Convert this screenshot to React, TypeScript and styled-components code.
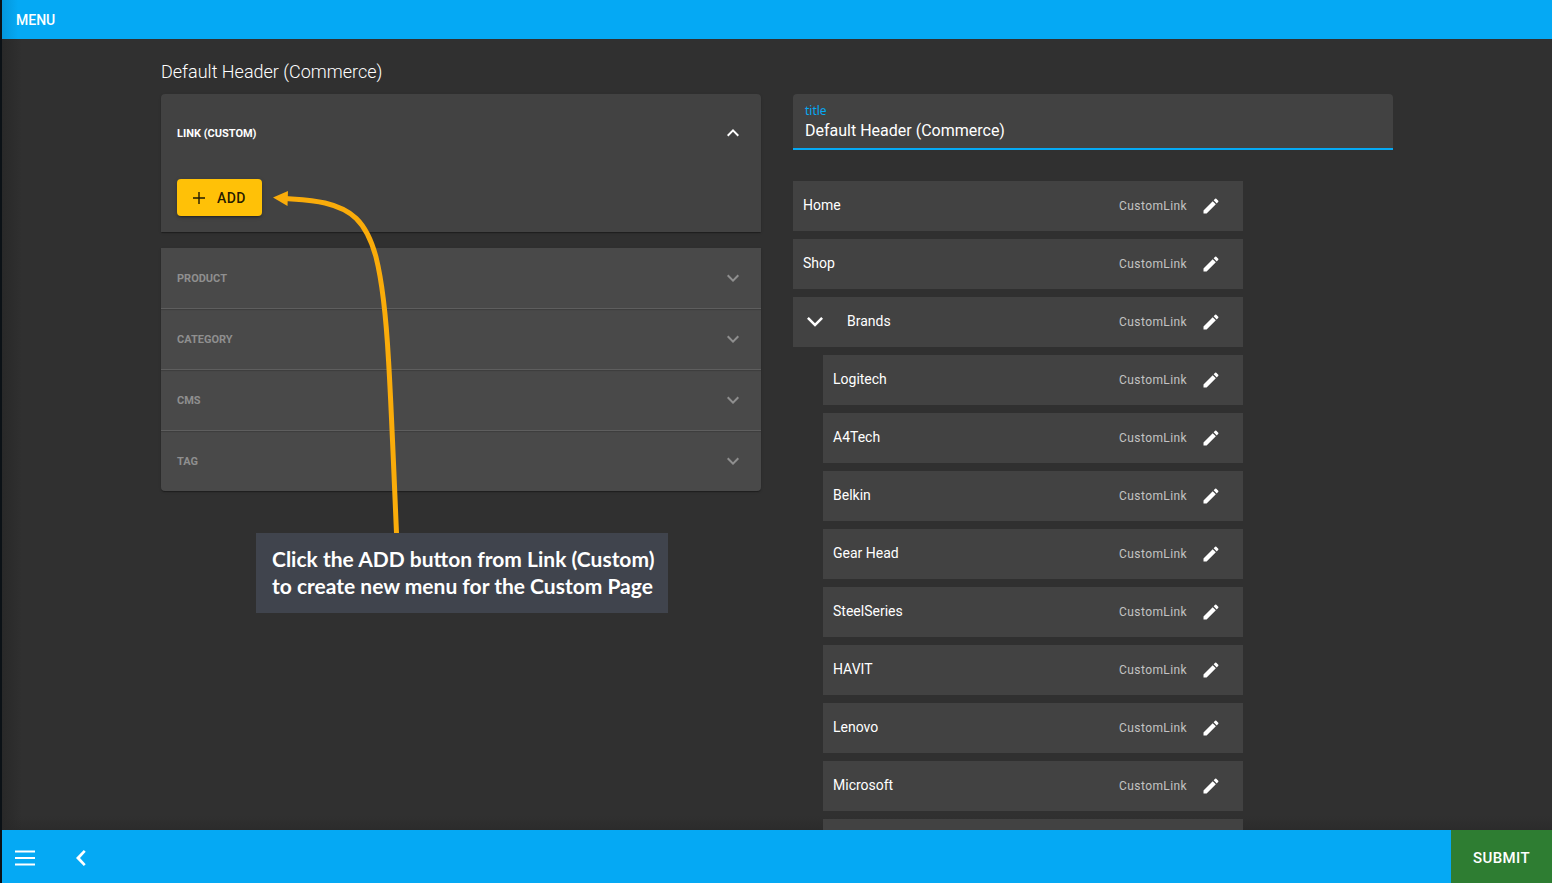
import React from "react";
import styled, { createGlobalStyle } from "styled-components";

const GlobalStyle = createGlobalStyle`
  * { box-sizing: border-box; }
  body {
    margin: 0;
    background: #303030;
    color: #fff;
    font-family: Roboto, "Liberation Sans", sans-serif;
    font-size: 14px;
    line-height: 20px;
  }
  button, input { font-family: inherit; color: inherit; }
`;

const Page = styled.div`
  height: 100vh;
  display: flex;
  flex-direction: column;
  border-left: 2px solid #0b1116;
  background: #303030;
  overflow: hidden;
`;

const TopBar = styled.header`
  flex: none;
  height: 39px;
  padding: 0 14px;
  display: flex;
  align-items: center;
  background: linear-gradient(90deg, #0496db 0, #05a9f4 16px) #05a9f4;
`;

const TopTitle = styled.h1`
  margin: 0;
  font-size: 14px;
  font-weight: 500;
  line-height: 20px;
`;

const Main = styled.main`
  flex: 1;
  min-height: 0;
  overflow: hidden;
  background: linear-gradient(90deg, #282828 0, rgba(48, 48, 48, 0) 20px),
    linear-gradient(0deg, #2b2b2b 0, rgba(48, 48, 48, 0) 14px);
`;

const Container = styled.div`
  max-width: 1280px;
  margin: 0 auto;
  padding: 20px 24px 0;
`;

const PageTitle = styled.h2`
  margin: 0 0 9px;
  font-size: 18px;
  font-weight: 300;
  line-height: 26px;
`;

const Columns = styled.div`
  display: grid;
  grid-template-columns: 1fr 1fr;
  gap: 32px;
  align-items: start;
`;

const Side = styled.section`
  position: relative;
  display: flex;
  flex-direction: column;
  gap: 16px;
`;

const cardShadow =
  "0 2px 1px -1px rgba(0,0,0,.2), 0 1px 1px rgba(0,0,0,.14), 0 1px 3px rgba(0,0,0,.12)";

const OpenPanel = styled.div`
  background: #424242;
  border-radius: 4px 4px 0 0;
  box-shadow: ${cardShadow};
`;

const PanelHeader = styled.button<{ $open?: boolean }>`
  width: 100%;
  height: ${(p) => (p.$open ? 77 : 60)}px;
  padding: 0 16px;
  display: flex;
  align-items: center;
  justify-content: space-between;
  border: 0;
  background: none;
  color: ${(p) => (p.$open ? "#fff" : "#8f8f8f")};
  font-size: 11px;
  font-weight: 700;
  line-height: 16px;
  text-transform: uppercase;
`;

const PanelLabel = styled.span`
  padding-top: 2px;
`;

const PanelBody = styled.div`
  padding: 8px 16px 16px;
`;

const PanelStack = styled.div`
  background: #494949;
  border-radius: 0 0 4px 4px;
  box-shadow: ${cardShadow};
`;

const ClosedPanel = styled.div`
  & + & {
    border-top: 1px solid #5e5e5e;
    box-shadow: inset 0 2px 1px -1px rgba(0, 0, 0, 0.16);
  }
`;

const AddButton = styled.button`
  height: 37px;
  padding: 0 16px 0 12px;
  display: flex;
  align-items: center;
  gap: 8px;
  border: 0;
  border-radius: 4px;
  background: #ffc107;
  color: rgba(0, 0, 0, 0.87);
  font-size: 14px;
  font-weight: 500;
  letter-spacing: 0.4px;
  box-shadow: 0 3px 1px -2px rgba(0, 0, 0, 0.2), 0 2px 2px rgba(0, 0, 0, 0.14),
    0 1px 5px rgba(0, 0, 0, 0.12);
`;

const Icon = styled.svg<{ $size: number }>`
  display: block;
  flex: none;
  width: ${(p) => p.$size}px;
  height: ${(p) => p.$size}px;
  fill: currentColor;
`;

const Arrow = styled.svg`
  position: absolute;
  left: 104px;
  top: 86px;
  width: 150px;
  height: 354px;
  pointer-events: none;
`;

const Callout = styled.p`
  position: absolute;
  left: 95px;
  top: 439px;
  width: 412px;
  height: 80px;
  margin: 0;
  padding: 12px 16px;
  background: #40444d;
  font-family: Lato, "Liberation Sans", sans-serif;
  font-size: 21px;
  font-weight: 700;
  line-height: 27px;
  white-space: nowrap;
`;

const Editor = styled.section`
  display: flex;
  flex-direction: column;
  gap: 31px;
`;

const Field = styled.div`
  height: 56px;
  padding: 8px 12px 0;
  display: flex;
  flex-direction: column;
  gap: 1px;
  border-bottom: 2px solid #05a9f4;
  border-radius: 4px 4px 0 0;
  background: #424242;
`;

const FieldLabel = styled.label`
  color: #05a9f4;
  font-family: "Noto Sans", sans-serif;
  font-size: 12px;
  line-height: 18px;
`;

const FieldInput = styled.input`
  width: 100%;
  height: 20px;
  padding: 0;
  border: 0;
  outline: 0;
  background: none;
  font-size: 16px;
  line-height: 20px;
`;

const MenuList = styled.ul`
  width: 75%;
  margin: 0;
  padding: 0;
  display: flex;
  flex-direction: column;
  gap: 8px;
  list-style: none;
`;

const MenuItem = styled.li<{ $nested?: boolean }>`
  height: 50px;
  margin-left: ${(p) => (p.$nested ? 30 : 0)}px;
  padding: 0 20px 0 10px;
  display: flex;
  align-items: center;
  background: #424242;
`;

const ItemName = styled.span`
  flex: 1;
  padding-bottom: 2px;
`;

const ItemType = styled.span`
  margin-right: 12px;
  color: #c3c3c3;
  font-size: 12px;
  letter-spacing: 0.4px;
`;

const IconButton = styled.button`
  padding: 0;
  border: 0;
  background: none;
`;

const ExpandButton = styled(IconButton)`
  margin-right: 20px;
`;

const EditButton = styled(IconButton)`
  padding: 2px;
`;

const BottomBar = styled.footer`
  flex: none;
  height: 53px;
  padding-left: 11px;
  display: flex;
  align-items: center;
  gap: 32px;
  background: #05a9f4;
`;

const BarButton = styled(IconButton)`
  padding-top: 2px;
`;

const SubmitButton = styled.button`
  width: 101px;
  height: 100%;
  margin-left: auto;
  padding: 2px 0 0;
  border: 0;
  background: #2e7d32;
  font-size: 15px;
  font-weight: 500;
  letter-spacing: 0.4px;
`;

const DOWN = "M7.41 8.59 12 13.17l4.59-4.58L18 10l-6 6-6-6 1.41-1.41z";
const UP = "M7.41 15.41 12 10.83l4.59 4.58L18 14l-6-6-6 6z";
const PENCIL =
  "M3 17.25V21h3.75L17.81 9.94l-3.75-3.75L3 17.25zM20.71 7.04c.39-.39.39-1.02 0-1.41l-2.34-2.34a.9959.9959 0 0 0-1.41 0l-1.83 1.83 3.75 3.75 1.83-1.83z";

const Glyph = ({ d, size }: { d: string; size: number }) => (
  <Icon $size={size} viewBox="0 0 24 24" aria-hidden="true">
    <path d={d} />
  </Icon>
);

const closedPanels = ["Product", "Category", "CMS", "Tag"];

const items = [
  { name: "Home" },
  { name: "Shop" },
  { name: "Brands", expandable: true },
  ...[
    "Logitech",
    "A4Tech",
    "Belkin",
    "Gear Head",
    "SteelSeries",
    "HAVIT",
    "Lenovo",
    "Microsoft",
  ].map((name) => ({ name, nested: true })),
] as { name: string; expandable?: boolean; nested?: boolean }[];

export default function App() {
  return (
    <>
      <GlobalStyle />
      <Page>
        <TopBar>
          <TopTitle>MENU</TopTitle>
        </TopBar>
        <Main>
          <Container>
            <PageTitle>Default Header (Commerce)</PageTitle>
            <Columns>
              <Side>
                <OpenPanel>
                  <PanelHeader $open aria-expanded="true">
                    <PanelLabel>Link (Custom)</PanelLabel>
                    <Glyph d={UP} size={24} />
                  </PanelHeader>
                  <PanelBody>
                    <AddButton>
                      <Icon $size={20} viewBox="0 0 20 20" aria-hidden="true">
                        <path d="M9.300 4h1.400v5.300H16v1.400h-5.300V16H9.300v-5.300H4V9.300h5.300z" />
                      </Icon>
                      ADD
                    </AddButton>
                  </PanelBody>
                </OpenPanel>
                <PanelStack>
                  {closedPanels.map((name) => (
                    <ClosedPanel key={name}>
                      <PanelHeader aria-expanded="false">
                        <PanelLabel>{name}</PanelLabel>
                        <Glyph d={DOWN} size={24} />
                      </PanelHeader>
                    </ClosedPanel>
                  ))}
                </PanelStack>
                <Arrow viewBox="265 180 150 354" aria-hidden="true">
                  <path
                    d="M396.5 533C394 475 391 400 388.5 360C386 315 383 285 376 257C366 220 350 209 325 203C313 200 300 199.500 286 198.500"
                    fill="none"
                    stroke="#faac0a"
                    strokeWidth="5"
                  />
                  <path d="M273 197.500L288 191L287.500 206z" fill="#faac0a" />
                </Arrow>
                <Callout>
                  Click the ADD button from Link (Custom)
                  <br />
                  to create new menu for the Custom Page
                </Callout>
              </Side>
              <Editor>
                <Field>
                  <FieldLabel htmlFor="menu-title">title</FieldLabel>
                  <FieldInput id="menu-title" defaultValue="Default Header (Commerce)" />
                </Field>
                <MenuList>
                  {items.map((item) => (
                    <MenuItem key={item.name} $nested={item.nested}>
                      {item.expandable && (
                        <ExpandButton aria-label="Collapse">
                          <Icon $size={24} viewBox="0 0 24 24" aria-hidden="true">
                            <path d="M5.800 7 12 13.200l6.200-6.200L20 8.800l-8 8-8-8z" />
                          </Icon>
                        </ExpandButton>
                      )}
                      <ItemName>{item.name}</ItemName>
                      <ItemType>CustomLink</ItemType>
                      <EditButton aria-label={`Edit ${item.name}`}>
                        <Glyph d={PENCIL} size={20} />
                      </EditButton>
                    </MenuItem>
                  ))}
                  <MenuItem $nested aria-hidden="true" />
                </MenuList>
              </Editor>
            </Columns>
          </Container>
        </Main>
        <BottomBar>
          <BarButton aria-label="Open menu">
            <Icon $size={24} viewBox="0 0 24 24" aria-hidden="true">
              <path d="M2 4.500h20v2H2zM2 11h20v2H2zM2 17.500h20v2H2z" />
            </Icon>
          </BarButton>
          <BarButton aria-label="Back">
            <Icon $size={24} viewBox="0 0 24 24" aria-hidden="true">
              <path d="M14.800 4 16.700 5.800 11 12l5.700 6.200-1.900 1.800-7.800-8z" />
            </Icon>
          </BarButton>
          <SubmitButton>SUBMIT</SubmitButton>
        </BottomBar>
      </Page>
    </>
  );
}
